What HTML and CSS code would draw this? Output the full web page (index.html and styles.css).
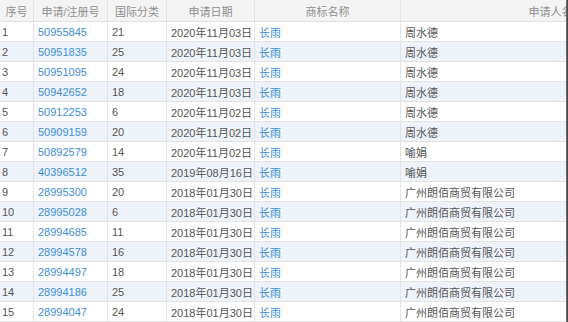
FILE: index.html
```html
<!DOCTYPE html>
<html lang="zh">
<head>
<meta charset="utf-8">
<link rel="stylesheet" href="styles.css">
</head>
<body>
<div class="frame">
  <div class="viewport">
    <div class="grid">
      <div class="row head">
        <div class="cell">序号</div>
        <div class="cell">申请/注册号</div>
        <div class="cell">国际分类</div>
        <div class="cell">申请日期</div>
        <div class="cell">商标名称</div>
        <div class="cell">申请人名称</div>
      </div>
      <div class="row"><div class="cell">1</div><div class="cell link">50955845</div><div class="cell">21</div><div class="cell">2020年11月03日</div><div class="cell link">长雨</div><div class="cell">周水德</div></div>
      <div class="row"><div class="cell">2</div><div class="cell link">50951835</div><div class="cell">25</div><div class="cell">2020年11月03日</div><div class="cell link">长雨</div><div class="cell">周水德</div></div>
      <div class="row"><div class="cell">3</div><div class="cell link">50951095</div><div class="cell">24</div><div class="cell">2020年11月03日</div><div class="cell link">长雨</div><div class="cell">周水德</div></div>
      <div class="row"><div class="cell">4</div><div class="cell link">50942652</div><div class="cell">18</div><div class="cell">2020年11月03日</div><div class="cell link">长雨</div><div class="cell">周水德</div></div>
      <div class="row"><div class="cell">5</div><div class="cell link">50912253</div><div class="cell">6</div><div class="cell">2020年11月02日</div><div class="cell link">长雨</div><div class="cell">周水德</div></div>
      <div class="row"><div class="cell">6</div><div class="cell link">50909159</div><div class="cell">20</div><div class="cell">2020年11月02日</div><div class="cell link">长雨</div><div class="cell">周水德</div></div>
      <div class="row"><div class="cell">7</div><div class="cell link">50892579</div><div class="cell">14</div><div class="cell">2020年11月02日</div><div class="cell link">长雨</div><div class="cell">喻娟</div></div>
      <div class="row"><div class="cell">8</div><div class="cell link">40396512</div><div class="cell">35</div><div class="cell">2019年08月16日</div><div class="cell link">长雨</div><div class="cell">喻娟</div></div>
      <div class="row"><div class="cell">9</div><div class="cell link">28995300</div><div class="cell">20</div><div class="cell">2018年01月30日</div><div class="cell link">长雨</div><div class="cell">广州朗佰商贸有限公司</div></div>
      <div class="row"><div class="cell">10</div><div class="cell link">28995028</div><div class="cell">6</div><div class="cell">2018年01月30日</div><div class="cell link">长雨</div><div class="cell">广州朗佰商贸有限公司</div></div>
      <div class="row"><div class="cell">11</div><div class="cell link">28994685</div><div class="cell">11</div><div class="cell">2018年01月30日</div><div class="cell link">长雨</div><div class="cell">广州朗佰商贸有限公司</div></div>
      <div class="row"><div class="cell">12</div><div class="cell link">28994578</div><div class="cell">16</div><div class="cell">2018年01月30日</div><div class="cell link">长雨</div><div class="cell">广州朗佰商贸有限公司</div></div>
      <div class="row"><div class="cell">13</div><div class="cell link">28994497</div><div class="cell">18</div><div class="cell">2018年01月30日</div><div class="cell link">长雨</div><div class="cell">广州朗佰商贸有限公司</div></div>
      <div class="row"><div class="cell">14</div><div class="cell link">28994186</div><div class="cell">25</div><div class="cell">2018年01月30日</div><div class="cell link">长雨</div><div class="cell">广州朗佰商贸有限公司</div></div>
      <div class="row"><div class="cell">15</div><div class="cell link">28994047</div><div class="cell">24</div><div class="cell">2018年01月30日</div><div class="cell link">长雨</div><div class="cell">广州朗佰商贸有限公司</div></div>
    </div>
  </div>
  <div class="edge"></div>
</div>
</body>
</html>
```

FILE: styles.css
```css
html, body {
  margin: 0;
  padding: 0;
  background: #ffffff;
}
body {
  font-family: "Liberation Sans", "Noto Sans CJK SC", sans-serif;
  font-size: 11px;
  color: #555555;
}
.frame {
  display: flex;
  width: 568px;
  height: 322px;
  overflow: hidden;
}
.viewport {
  width: 566px;
  overflow: hidden;
  flex: none;
}
.edge {
  width: 2px;
  flex: none;
  background: linear-gradient(to right, #7a7a7a, #3a3a3a);
}
.grid {
  width: 712px;
}
.row {
  display: grid;
  grid-template-columns: 34px 74px 59px 88px 146px 311px;
  height: 20px;
  border-bottom: 1px solid #e3e3e3;
  box-sizing: border-box;
}
.row:nth-child(odd):not(.head) {
  background: #eef3f9;
}
.row.head {
  height: 22px;
  background: #f3f3f3;
  color: #8f8f8f;
  border-bottom: 1px solid #e0e0e0;
}
.cell {
  border-right: 1px solid #e3e3e3;
  padding: 0 4px;
  display: flex;
  align-items: center;
  white-space: nowrap;
  overflow: hidden;
}
.cell:first-child {
  padding-left: 2px;
}
.head .cell {
  justify-content: center;
  padding: 0;
}
.link {
  color: #3b8fd6;
}
```
